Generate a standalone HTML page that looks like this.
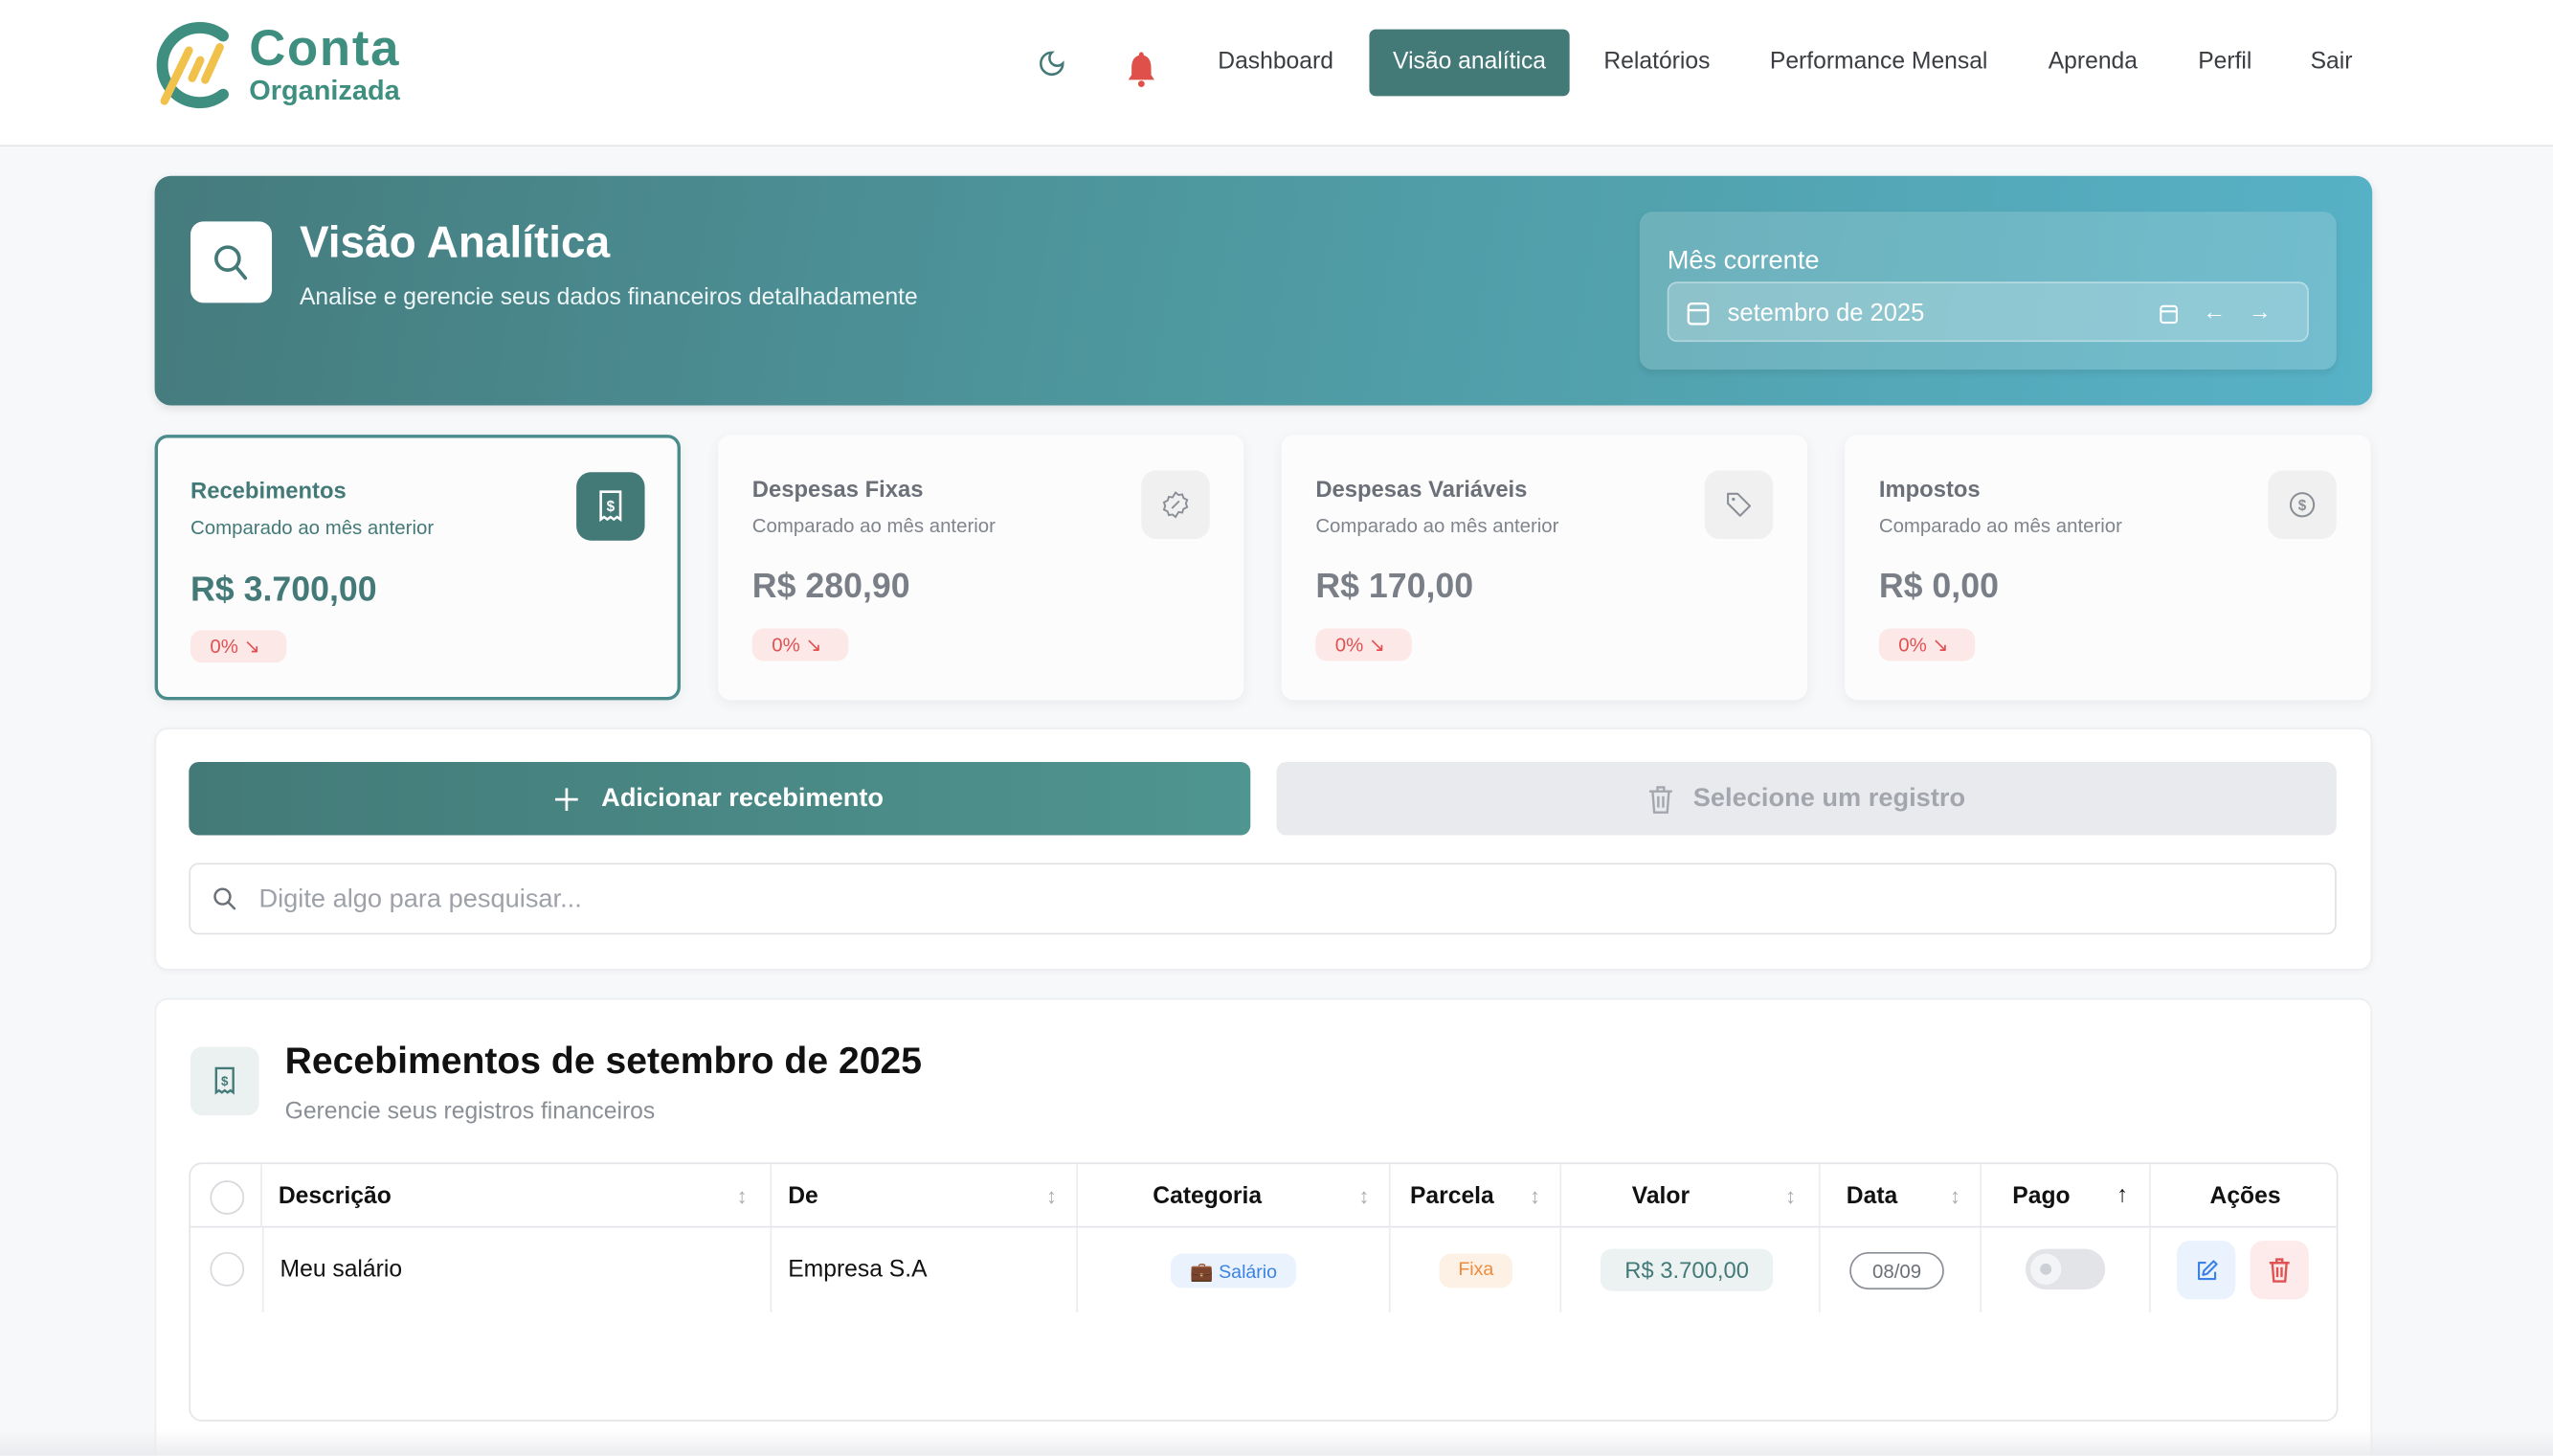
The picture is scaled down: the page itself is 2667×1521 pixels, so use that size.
<!DOCTYPE html>
<html><head><meta charset="utf-8"><style>
*{box-sizing:border-box;margin:0;padding:0}
html,body{width:2667px;height:1521px;overflow:hidden;background:#f7f8fa}
body{font-family:"Liberation Sans",sans-serif}
#w{position:absolute;left:0;top:0;width:1568px;height:894.3px;transform:scale(1.70089);transform-origin:0 0;background:#f7f8fa;overflow:hidden}
.a{position:absolute}
.hdr{left:0;top:0;width:1568px;height:90px;background:#fff;border-bottom:1.5px solid #e3e5ea}
.nav{font-size:14.5px;color:#3a3d42;top:30px}
.card{background:#fcfcfd;border-radius:8px;box-shadow:0 2px 8px rgba(0,0,0,.06);width:323px;height:163px;top:267px}
.card .t{position:absolute;left:21px;top:25px;font-size:14px;color:#6b7078;font-weight:600}
.card .s{position:absolute;left:21px;top:49px;font-size:12px;color:#80858c}
.card .v{position:absolute;left:21px;top:82px;font-size:21px;color:#7a7f87;font-weight:600}
.card .b{position:absolute;left:21px;top:119px;width:59px;height:20px;border-radius:7px;background:#fde8e8;color:#e05252;font-size:12px;padding:3px 0 0 12px}
.card .ic{position:absolute;right:21px;top:22px;width:42px;height:42px;border-radius:9px;background:#f0f0f1;display:flex;align-items:center;justify-content:center}
.th{position:absolute;top:0;height:39px;font-size:14.5px;font-weight:700;color:#111;padding-top:12px;border-right:1px solid #ececee}
.td{position:absolute;top:39px;height:52px;font-size:14.5px;color:#111;border-right:1px solid #ececee}
.sort{position:absolute;top:12px;color:#a9adb3;font-size:13px}
.btn{display:flex;align-items:center;justify-content:center;font-size:16px;font-weight:600}
</style></head><body><div id="w">
<div class="a hdr"></div>
<svg class="a" style="left:94px;top:12px" width="56" height="56" viewBox="0 0 56 56"><path d="M43 10 A23 23 0 1 0 43 46" fill="none" stroke="#3f8f80" stroke-width="7" stroke-linecap="round"/><g stroke="#f0c24c" stroke-width="5" stroke-linecap="round"><line x1="22" y1="19" x2="7" y2="50"/><line x1="29" y1="25" x2="24" y2="36"/><line x1="41" y1="17" x2="32" y2="37"/></g></svg>
<div class="a" style="left:153px;top:12px;font-size:31px;font-weight:700;color:#3f8f80;letter-spacing:1px">Conta</div>
<div class="a" style="left:153px;top:46px;font-size:17px;font-weight:700;color:#3f8f80">Organizada</div>
<svg class="a" style="left:637px;top:30px" width="18" height="18" viewBox="0 0 24 24"><path d="M12 3a6 6 0 0 0 9 9 9 9 0 1 1-9-9z" fill="none" stroke="#437a78" stroke-width="2"/></svg>
<svg class="a" style="left:690px;top:30px" width="22" height="24" viewBox="0 0 22 24"><path d="M11 2c-1 0-1.5 1-1.5 2C6 5 5 8 5 12v4l-2 3h16l-2-3v-4c0-4-1-7-4.5-8 0-1-.5-2-1.5-2z" fill="#e0504a"/><circle cx="11" cy="21.5" r="2" fill="#e0504a"/></svg>
<div class="a nav" style="left:748px">Dashboard</div>
<div class="a" style="left:841px;top:18px;width:123px;height:41px;background:#437a78;border-radius:4px;color:#fff;font-size:14.5px;padding-top:12px;text-align:center">Visão analítica</div>
<div class="a nav" style="left:985px">Relatórios</div>
<div class="a nav" style="left:1087px">Performance Mensal</div>
<div class="a nav" style="left:1258px">Aprenda</div>
<div class="a nav" style="left:1350px">Perfil</div>
<div class="a nav" style="left:1419px">Sair</div>

<div class="a" style="left:95px;top:108px;width:1362px;height:141px;border-radius:10px;background:linear-gradient(100deg,#457b7d 0%,#4f9aa2 50%,#57b2c7 100%);box-shadow:0 2px 6px rgba(0,0,0,.1)"></div>
<div class="a" style="left:117px;top:136px;width:50px;height:50px;background:#fff;border-radius:8px"></div>
<svg class="a" style="left:129px;top:148px" width="26" height="26" viewBox="0 0 24 24"><circle cx="10" cy="10" r="6.5" fill="none" stroke="#437a78" stroke-width="2"/><line x1="15" y1="15" x2="20" y2="21" stroke="#437a78" stroke-width="2" stroke-linecap="round"/></svg>
<div class="a" style="left:184px;top:134px;font-size:27px;font-weight:700;color:#fff">Visão Analítica</div>
<div class="a" style="left:184px;top:175px;font-size:14.5px;color:#eef6f7">Analise e gerencie seus dados financeiros detalhadamente</div>
<div class="a" style="left:1007px;top:130px;width:428px;height:97px;border-radius:8px;background:rgba(255,255,255,.16);box-shadow:0 2px 4px rgba(0,0,0,.08)"></div>
<div class="a" style="left:1024px;top:152px;font-size:16px;color:#fff">Mês corrente</div>
<div class="a" style="left:1024px;top:173px;width:394px;height:37px;border-radius:6px;background:rgba(255,255,255,.22);border:1px solid rgba(255,255,255,.35)"></div>
<svg class="a" style="left:1036px;top:184px" width="14" height="16" viewBox="0 0 14 16"><rect x="1" y="2.5" width="12" height="12.5" rx="2" fill="none" stroke="#fff" stroke-width="1.4"/><line x1="1" y1="6.5" x2="13" y2="6.5" stroke="#fff" stroke-width="1.4"/></svg>
<div class="a" style="left:1061px;top:184px;font-size:15px;color:#fff">setembro de 2025</div>
<svg class="a" style="left:1326px;top:186px" width="12" height="13" viewBox="0 0 14 16"><rect x="1" y="2.5" width="12" height="12.5" rx="2" fill="none" stroke="#fff" stroke-width="1.5"/><line x1="1" y1="6.5" x2="13" y2="6.5" stroke="#fff" stroke-width="1.5"/></svg>
<div class="a" style="left:1353px;top:183px;font-size:14px;color:#fff">←</div>
<div class="a" style="left:1381px;top:183px;font-size:14px;color:#fff">→</div>

<div class="a card" style="left:95px;border:2px solid #4a8c8c;background:#fcfcfd">
<div class="t" style="color:#437a78;left:20px;top:24px">Recebimentos</div><div class="s" style="color:#437a78;left:20px;top:48px">Comparado ao mês anterior</div>
<div class="v" style="color:#437a78;left:20px;top:82px">R$ 3.700,00</div><div class="b" style="left:20px;top:118px">0% ↘</div>
<div class="ic" style="background:#437a78;right:20px;top:21px"><svg width="16" height="20" viewBox="0 0 16 20"><path d="M2 1h12v17l-2-1.5-2 1.5-2-1.5-2 1.5-2-1.5-2 1.5z" fill="none" stroke="#fff" stroke-width="1.5"/><text x="8" y="13" font-size="9" fill="#fff" text-anchor="middle" font-family="Liberation Sans" font-weight="700">$</text></svg></div></div>
<div class="a card" style="left:441px"><div class="t">Despesas Fixas</div><div class="s">Comparado ao mês anterior</div><div class="v">R$ 280,90</div><div class="b">0% ↘</div>
<div class="ic"><svg width="18" height="18" viewBox="0 0 24 24"><path d="M12 2l2.5 2 3-.5 1 3 3 1.5-1 3 1 3-3 1.5-1 3-3-.5L12 22l-2.5-2-3 .5-1-3-3-1.5 1-3-1-3 3-1.5 1-3 3 .5z" fill="none" stroke="#8a8f96" stroke-width="1.5"/><line x1="9" y1="15" x2="15" y2="9" stroke="#8a8f96" stroke-width="1.5"/></svg></div></div>
<div class="a card" style="left:787px"><div class="t">Despesas Variáveis</div><div class="s">Comparado ao mês anterior</div><div class="v">R$ 170,00</div><div class="b">0% ↘</div>
<div class="ic"><svg width="18" height="18" viewBox="0 0 24 24"><path d="M3 3h8l10 10-8 8L3 11z" fill="none" stroke="#8a8f96" stroke-width="1.6" stroke-linejoin="round"/><circle cx="7.5" cy="7.5" r="1.3" fill="#8a8f96"/></svg></div></div>
<div class="a card" style="left:1133px"><div class="t">Impostos</div><div class="s">Comparado ao mês anterior</div><div class="v">R$ 0,00</div><div class="b">0% ↘</div>
<div class="ic"><svg width="18" height="18" viewBox="0 0 24 24"><circle cx="12" cy="12" r="9.5" fill="none" stroke="#8a8f96" stroke-width="1.6"/><text x="12" y="16.5" font-size="12" fill="#8a8f96" text-anchor="middle" font-family="Liberation Sans" font-weight="700">$</text></svg></div></div>

<div class="a" style="left:95px;top:447px;width:1362px;height:149px;background:#fff;border-radius:8px;border:1px solid #eceef1;box-shadow:0 1px 4px rgba(0,0,0,.04)"></div>
<div class="a btn" style="left:116px;top:468px;width:652px;height:45px;border-radius:6px;background:linear-gradient(90deg,#437a78,#4f9590);color:#fff"><svg width="14" height="14" viewBox="0 0 14 14" style="margin-right:14px"><path d="M7 0v14M0 7h14" stroke="#fff" stroke-width="1.6"/></svg>Adicionar recebimento</div>
<div class="a btn" style="left:784px;top:468px;width:651px;height:45px;border-radius:6px;background:#e9eaee;color:#a3a7ad"><svg width="16" height="18" viewBox="0 0 16 18" style="margin-right:12px"><path d="M1 4h14M6 4V1.5h4V4M3 4l1 13h8l1-13M6.5 7v7M9.5 7v7" fill="none" stroke="#a3a7ad" stroke-width="1.4"/></svg>Selecione um registro</div>
<div class="a" style="left:116px;top:530px;width:1319px;height:44px;border-radius:6px;border:1px solid #dfe1e5;background:#fff"></div>
<svg class="a" style="left:130px;top:544px" width="16" height="16" viewBox="0 0 24 24"><circle cx="10" cy="10" r="7" fill="none" stroke="#6b7078" stroke-width="2.2"/><line x1="15" y1="15" x2="21" y2="21" stroke="#6b7078" stroke-width="2.2" stroke-linecap="round"/></svg>
<div class="a" style="left:159px;top:544px;font-size:16px;color:#9ea2a8">Digite algo para pesquisar...</div>

<div class="a" style="left:95px;top:613px;width:1362px;height:300px;background:#fff;border-radius:8px;border:1px solid #eceef1"></div>
<div class="a" style="left:117px;top:643px;width:42px;height:42px;border-radius:7px;background:#eaf1f0;display:flex;align-items:center;justify-content:center"><svg width="14" height="18" viewBox="0 0 16 20"><path d="M2 1h12v17l-2-1.5-2 1.5-2-1.5-2 1.5-2-1.5-2 1.5z" fill="none" stroke="#437a78" stroke-width="1.6"/><text x="8" y="13" font-size="9" fill="#437a78" text-anchor="middle" font-family="Liberation Sans" font-weight="700">$</text></svg></div>
<div class="a" style="left:175px;top:638px;font-size:23px;font-weight:700;color:#111">Recebimentos de setembro de 2025</div>
<div class="a" style="left:175px;top:675px;font-size:14.5px;color:#8a8f96">Gerencie seus registros financeiros</div>

<div class="a" style="left:116px;top:714px;width:1320px;height:159px;border:1px solid #e3e5e8;border-radius:8px;background:#fff;overflow:hidden">
<div style="position:absolute;left:0;top:38px;width:100%;border-top:1px solid #e3e5e8"></div>
<div class="th" style="left:0;width:44px"><div style="position:absolute;left:12px;top:10px;width:21px;height:21px;border-radius:50%;border:1px solid #d6d8dc"></div></div>
<div class="th" style="left:44px;width:313px;padding-left:10px">Descrição<span class="sort" style="right:14px">↕</span></div>
<div class="th" style="left:357px;width:188px;padding-left:10px">De<span class="sort" style="right:12px">↕</span></div>
<div class="th" style="left:545px;width:192px;text-align:center;padding-right:32px">Categoria<span class="sort" style="right:12px">↕</span></div>
<div class="th" style="left:737px;width:105px;padding-left:12px">Parcela<span class="sort" style="right:12px">↕</span></div>
<div class="th" style="left:842px;width:159px;text-align:center;padding-right:36px">Valor<span class="sort" style="right:14px">↕</span></div>
<div class="th" style="left:1001px;width:99px;padding-left:16px">Data<span class="sort" style="right:12px">↕</span></div>
<div class="th" style="left:1100px;width:104px;padding-left:19px">Pago<span style="position:absolute;right:13px;top:10px;font-size:14px">↑</span></div>
<div class="th" style="left:1204px;width:116px;text-align:center;border-right:none">Ações</div>
<div class="td" style="left:0;width:44px;border-right:none"><div style="position:absolute;left:12px;top:15px;width:21px;height:21px;border-radius:50%;border:1px solid #d6d8dc"></div></div>
<div class="td" style="left:44px;width:313px;padding:18px 10px;border-left:1px solid #ececee">Meu salário</div>
<div class="td" style="left:357px;width:188px;padding:18px 10px">Empresa S.A</div>
<div class="td" style="left:545px;width:192px"><div style="position:absolute;left:57px;top:16px;width:77px;height:21px;border-radius:7px;background:#eaf2fd;color:#3b82e6;font-size:11.5px;padding:4px 0 0 12px">💼 Salário</div></div>
<div class="td" style="left:737px;width:105px"><div style="position:absolute;left:30px;top:16px;width:45px;height:21px;border-radius:7px;background:#fdf1e6;color:#ef8a3c;font-size:11.5px;text-align:center;padding-top:4px">Fixa</div></div>
<div class="td" style="left:842px;width:159px"><div style="position:absolute;left:24px;top:13px;width:106px;height:26px;border-radius:7px;background:#ebf2f1;color:#437a78;font-size:14px;text-align:center;padding-top:5px">R$ 3.700,00</div></div>
<div class="td" style="left:1001px;width:99px"><div style="position:absolute;left:18px;top:15px;width:58px;height:23px;border-radius:12px;border:1px solid #8a8f96;color:#6b7078;font-size:12px;text-align:center;padding-top:4px">08/09</div></div>
<div class="td" style="left:1100px;width:104px"><div style="position:absolute;left:27px;top:13px;width:49px;height:25px;border-radius:13px;background:#e2e4e8"><div style="position:absolute;left:3px;top:3px;width:19px;height:19px;border-radius:50%;background:#f3f4f6"><div style="position:absolute;left:6px;top:6px;width:7px;height:7px;border-radius:50%;background:#cdd0d5"></div></div></div></div>
<div class="td" style="left:1204px;width:116px;border-right:none">
<div style="position:absolute;left:16px;top:8px;width:36px;height:36px;border-radius:8px;background:#eaf2fd;display:flex;align-items:center;justify-content:center"><svg width="15" height="15" viewBox="0 0 24 24"><path d="M11 4H4v16h16v-7M18.5 2.5l3 3L12 15l-4 1 1-4z" fill="none" stroke="#3b82e6" stroke-width="2" stroke-linejoin="round"/></svg></div>
<div style="position:absolute;left:61px;top:8px;width:36px;height:36px;border-radius:8px;background:#fdeaea;display:flex;align-items:center;justify-content:center"><svg width="14" height="16" viewBox="0 0 16 18"><path d="M1 4h14M6 4V1.5h4V4M3 4l1 13h8l1-13M6.5 7v7M9.5 7v7" fill="none" stroke="#e05252" stroke-width="1.6"/></svg></div>
</div>
</div>
<div class="a" style="left:0;top:878px;width:1568px;height:17px;background:linear-gradient(rgba(240,241,243,0),rgba(232,233,236,.9))"></div>
</div></body></html>
